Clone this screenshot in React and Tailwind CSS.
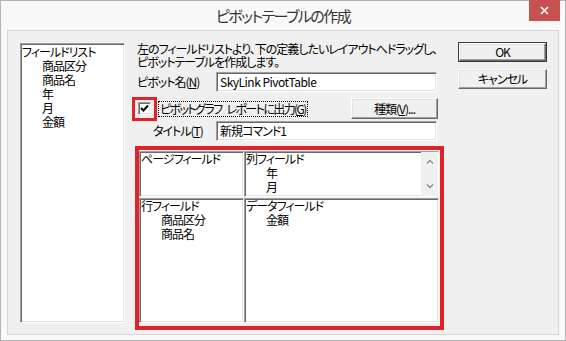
import React from 'react';

const font = "font-['Noto_Sans_CJK_JP',sans-serif] [font-feature-settings:'palt'] tracking-[-1px]";

// classic 3D edges
const sunken =
  'border border-t-[#a0a0a0] border-l-[#a0a0a0] border-r-white border-b-white shadow-[inset_1px_1px_0_#696969,inset_-1px_-1px_0_#e3e3e3]';
const raised =
  'border border-t-white border-l-white border-r-[#696969] border-b-[#696969] shadow-[inset_-1px_-1px_0_#a0a0a0,inset_1px_1px_0_#e3e3e3]';

const Key = ({ children }) => <span className="underline underline-offset-1">{children}</span>;

function FieldBox({ title, items, scroll }) {
  return (
    <div className={`${sunken} bg-white flex min-h-0`}>
      <div className="flex-1 pl-[1px] leading-[14px] whitespace-nowrap">
        <div>{title}</div>
        {items.map((s) => (
          <div key={s} className="pl-[20px]">{s}</div>
        ))}
      </div>
      {scroll && (
        <div className="w-[17px] bg-[#f0f0f0] flex flex-col justify-between items-center py-[7px]">
          <svg width="8" height="5" viewBox="0 0 8 5">
            <path d="M1 4.5 L4 1.5 L7 4.5" fill="none" stroke="#8a8a8a" strokeWidth="1.3" />
          </svg>
          <svg width="8" height="5" viewBox="0 0 8 5">
            <path d="M1 0.5 L4 3.5 L7 0.5" fill="none" stroke="#8a8a8a" strokeWidth="1.3" />
          </svg>
        </div>
      )}
    </div>
  );
}

export default function App() {
  return (
    <div className={`w-[566px] h-[341px] bg-[#f9f9f9] border border-[#b4b4b4] flex flex-col text-[12px] text-black ${font}`}>
      {/* title bar */}
      <div className="relative h-[29px] shrink-0 flex items-center justify-center">
        <span className="text-[15px] text-[#333] mt-[2px] tracking-[-1.5px]">ピボットテーブルの作成</span>
        <div className="absolute top-[-1px] right-[5px] w-[31px] h-[21px] bg-[#c75050] flex items-center justify-center">
          <svg width="9" height="9" viewBox="0 0 9 9">
            <path d="M1 1 L8 8 M8 1 L1 8" stroke="white" strokeWidth="1.6" />
          </svg>
        </div>
      </div>

      {/* client area */}
      <div className="mx-[6px] mb-[5px] flex-1 border border-[#d4d4d4] bg-[#f0f0f0] flex items-start">
        {/* field list */}
        <div className={`${sunken} bg-white ml-[12px] mt-[12px] w-[105px] h-[280px] pt-[1px] leading-[14px]`}>
          <div className="pl-[1px]">フィールドリスト</div>
          {['商品区分', '商品名', '年', '月', '金額'].map((s) => (
            <div key={s} className="pl-[21px]">{s}</div>
          ))}
        </div>

        {/* middle */}
        <div className="ml-[7px] mt-[11px] w-[312px] flex flex-col">
          <p className="pl-[5px] leading-[13px] whitespace-nowrap">
            左のフィールドリストより、下の定義したいレイアウトへドラッグし、
            <br />
            ピボットテーブルを作成します。
          </p>

          <div className="mt-[4px] h-[20px] flex items-center">
            <span className="w-[84px] pl-[5px]">
              ピボット名(<Key>N</Key>)
            </span>
            <div className={`${sunken} bg-white w-[221px] h-[20px] pl-[3px] leading-[18px] tracking-[-0.5px]`}>SkyLink PivotTable</div>
          </div>

          <div className="mt-[5px] h-[23px] flex items-center">
            <div className="w-[25px] h-[24px] border-[3px] border-[#e0232b] flex items-center justify-center">
              <div className={`${sunken} bg-white w-[13px] h-[13px] flex items-center justify-center`}>
                <svg width="9" height="9" viewBox="0 0 9 9">
                  <path d="M1 4 L3.5 6.5 L8 1.5" fill="none" stroke="black" strokeWidth="2" />
                </svg>
              </div>
            </div>
            <span className="ml-[1px] border border-dotted border-black px-[1px] leading-[14px] tracking-[-1.6px] whitespace-nowrap">
              ピボットグラフ<span className="inline-block w-[5px]" />レポートに出力(<Key>G</Key>)
            </span>
            <button className={`${raised} ml-auto mr-[6px] w-[87px] h-[21px] bg-[#f0f0f0] flex items-center justify-center`}>
              種類(<Key>V</Key>)...
            </button>
          </div>

          <div className="mt-[1px] h-[20px] flex items-center">
            <span className="w-[84px] pl-[21px]">
              タイトル(<Key>T</Key>)
            </span>
            <div className={`${sunken} bg-white w-[221px] h-[20px] pl-[3px] leading-[18px]`}>新規コマンド1</div>
          </div>

          {/* layout area */}
          <div className="mt-[5px] ml-[3px] w-[309px] h-[184px] border-4 border-[#e0232b] pt-[1px] pr-[1px] pb-[3px] grid grid-cols-[105px_1fr] grid-rows-[46px_1fr] gap-y-[1px]">
            <FieldBox title="ページフィールド" items={[]} />
            <FieldBox title="列フィールド" items={['年', '月']} scroll />
            <FieldBox title="行フィールド" items={['商品区分', '商品名']} />
            <FieldBox title="データフィールド" items={['金額']} />
          </div>
        </div>

        {/* buttons */}
        <div className="ml-[14px] mt-[11px] w-[89px] flex flex-col gap-[7px]">
          <div className="border border-[#3a3a3a]">
            <button className={`${raised} w-full h-[18px] bg-[#f0f0f0] flex items-center justify-center`}>OK</button>
          </div>
          <button className={`${raised} w-full h-[20px] bg-[#f0f0f0] flex items-center justify-center`}>キャンセル</button>
        </div>
      </div>
    </div>
  );
}
